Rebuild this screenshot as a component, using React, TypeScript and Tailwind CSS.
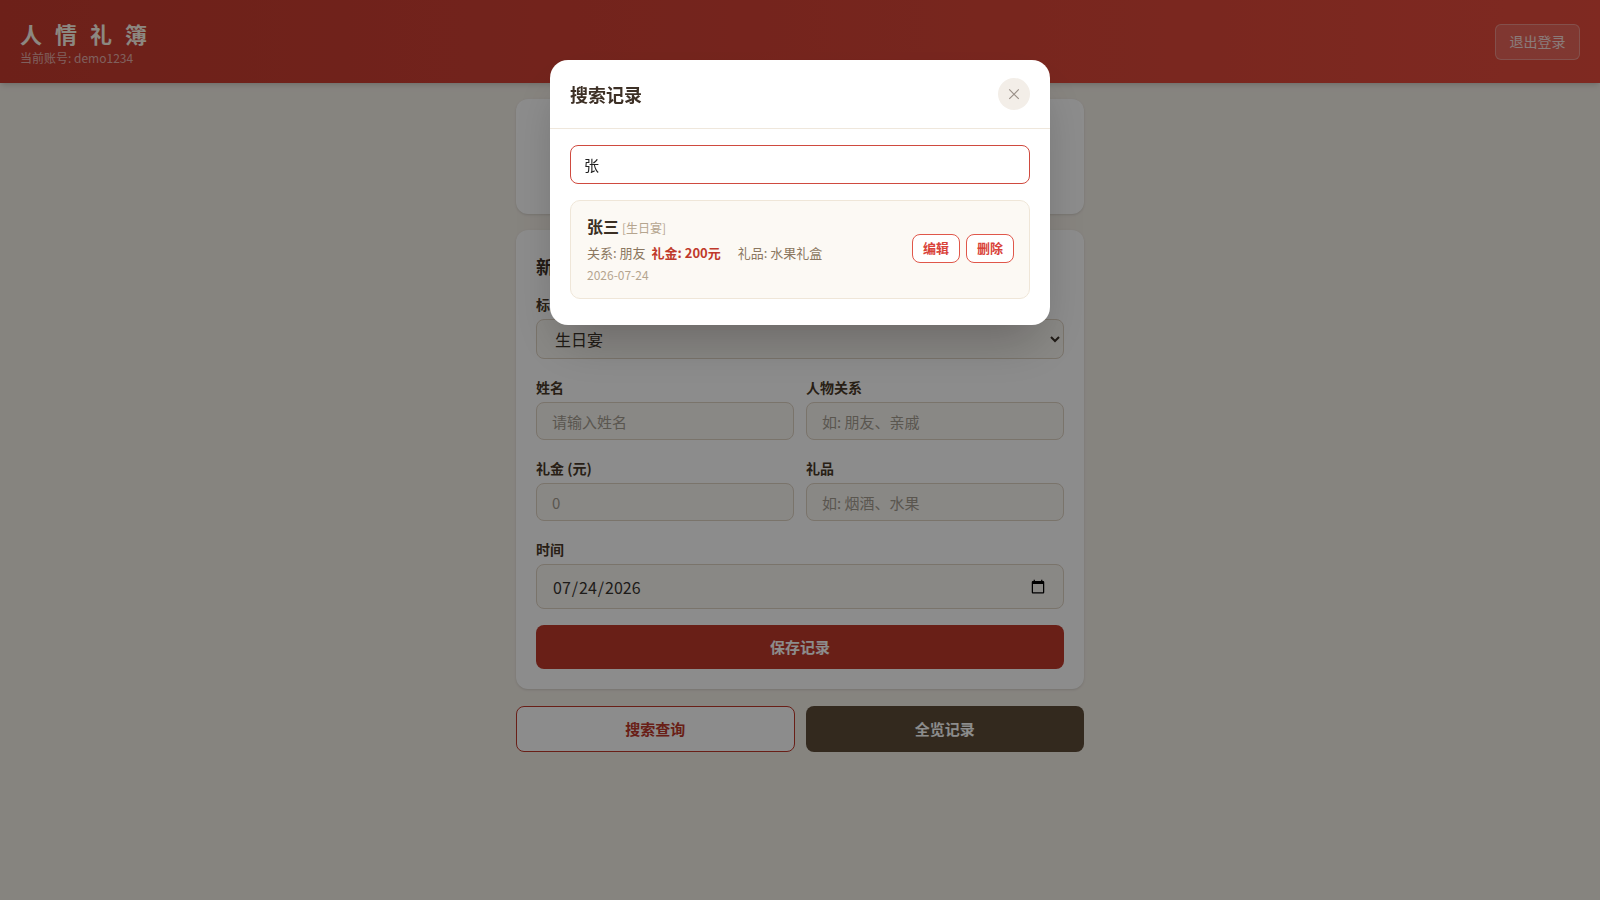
import React, { useMemo, useState } from 'react';

interface GiftRecord {
  id: number;
  name: string;
  tag: string;
  relation: string;
  amount: number;
  gift: string;
  date: string;
}

const initialRecords: GiftRecord[] = [
  { id: 1, name: '张三', tag: '生日宴', relation: '朋友', amount: 200, gift: '水果礼盒', date: '2026-07-24' },
];

const tagOptions = ['婚宴', '生日宴', '满月酒', '乔迁宴', '升学宴', '白事', '其他'];

const inputClass =
  'w-full rounded-lg border border-[#ded3c3] bg-[#faf7f2] px-[15px] text-[15px] text-[#3a3228] outline-none placeholder:text-[#a49d91]';

const FieldLabel: React.FC<{ children: React.ReactNode }> = ({ children }) => (
  <label className="mb-[5px] block text-[14px] leading-[20px] font-bold text-[#4a3a28]">{children}</label>
);

const RecordItem: React.FC<{ record: GiftRecord }> = ({ record }) => (
  <div className="flex items-center justify-between rounded-[10px] border border-[#efe6d8] bg-[#fcf9f4] pt-[11px] pb-[14px] pl-4 pr-[15px]">
    <div>
      <div className="leading-[28px]">
        <span className="text-[16px] font-bold text-[#3a2e22]">{record.name}</span>
        <span className="ml-[3px] text-[12px] text-[#b5a58f]">[{record.tag}]</span>
      </div>
      <div className="mt-px text-[13px] leading-[20px] text-[#8b7760]">
        <span>关系: {record.relation}</span>
        <span className="ml-[6px] font-bold text-[#c0392b]">礼金: {record.amount}元</span>
        <span className="ml-[17px]">礼品: {record.gift}</span>
      </div>
      <div className="mt-[3px] text-[12px] leading-[18px] text-[#b5a58f]">{record.date}</div>
    </div>
    <div className="flex gap-[6px]">
      <button
        type="button"
        className="h-[29px] rounded-lg border border-[#e0574a] bg-white px-[10px] text-[13px] font-bold text-[#d9433a]"
      >
        编辑
      </button>
      <button
        type="button"
        className="h-[29px] rounded-lg border border-[#e0574a] bg-white px-[10px] text-[13px] font-bold text-[#d9433a]"
      >
        删除
      </button>
    </div>
  </div>
);

export default function App() {
  const [records] = useState<GiftRecord[]>(initialRecords);
  const [query, setQuery] = useState('张');
  const [searchOpen, setSearchOpen] = useState(true);
  const [form, setForm] = useState({
    tag: '生日宴',
    name: '',
    relation: '',
    amount: '',
    gift: '',
    date: '2026-07-24',
  });

  const results = useMemo(
    () => records.filter((r) => query && (r.name.includes(query) || r.relation.includes(query) || r.gift.includes(query))),
    [records, query]
  );

  const total = records.reduce((sum, r) => sum + r.amount, 0);

  const update = (key: keyof typeof form) => (e: React.ChangeEvent<HTMLInputElement | HTMLSelectElement>) =>
    setForm({ ...form, [key]: e.target.value });

  return (
    <div className="min-h-screen bg-[#f5f0e8] font-['Noto_Sans_CJK_SC','Noto_Sans',sans-serif]">
      <header className="flex h-[83px] items-center justify-between bg-linear-to-r from-[#c63b2f] to-[#e74c3d] px-5 shadow-md">
        <div className="mt-[2px]">
          <h1 className="text-[22px] leading-[28px] font-bold tracking-[13px] text-[#fff7ec]">人情礼簿</h1>
          <p className="mt-[2px] text-[12px] leading-[18px] text-white/60">当前账号: demo1234</p>
        </div>
        <button
          type="button"
          className="h-9 w-[85px] rounded-md border border-white/30 bg-white/15 text-[14px] text-white/80"
        >
          退出登录
        </button>
      </header>

      <main className="mx-auto w-[568px] pt-4 pb-10">
        {/* summary */}
        <section className="flex h-[115px] items-center justify-center rounded-xl bg-white shadow-sm">
          <div className="grid w-[420px] grid-cols-3 text-center">
            <div>
              <div className="text-[13px] text-[#8b7760]">记录条数</div>
              <div className="mt-1 text-[22px] font-bold text-[#3d3026]">{records.length}</div>
            </div>
            <div>
              <div className="text-[13px] text-[#8b7760]">礼金合计</div>
              <div className="mt-1 text-[22px] font-bold text-[#c0392b]">¥{total}</div>
            </div>
            <div>
              <div className="text-[13px] text-[#8b7760]">礼品件数</div>
              <div className="mt-1 text-[22px] font-bold text-[#3d3026]">{records.filter((r) => r.gift).length}</div>
            </div>
          </div>
        </section>

        {/* new record form */}
        <section className="mt-4 rounded-xl bg-white p-5 shadow-sm">
          <h2 className="mb-3 text-[18px] leading-[32px] font-bold text-[#3d3026]">新增记录</h2>

          <div className="mb-[18px]">
            <FieldLabel>标签</FieldLabel>
            <select
              value={form.tag}
              onChange={update('tag')}
              className="h-10 w-full rounded-lg border border-[#ded3c3] bg-[#faf7f2] px-[14px] text-[16px] text-[#3a3228] outline-none"
            >
              {tagOptions.map((t) => (
                <option key={t} value={t}>
                  {t}
                </option>
              ))}
            </select>
          </div>

          <div className="mb-[18px] grid grid-cols-2 gap-3">
            <div>
              <FieldLabel>姓名</FieldLabel>
              <input value={form.name} onChange={update('name')} placeholder="请输入姓名" className={`${inputClass} h-[38px]`} />
            </div>
            <div>
              <FieldLabel>人物关系</FieldLabel>
              <input
                value={form.relation}
                onChange={update('relation')}
                placeholder="如: 朋友、亲戚"
                className={`${inputClass} h-[38px]`}
              />
            </div>
          </div>

          <div className="mb-[18px] grid grid-cols-2 gap-3">
            <div>
              <FieldLabel>礼金 (元)</FieldLabel>
              <input
                type="number"
                value={form.amount}
                onChange={update('amount')}
                placeholder="0"
                className={`${inputClass} h-[38px]`}
              />
            </div>
            <div>
              <FieldLabel>礼品</FieldLabel>
              <input value={form.gift} onChange={update('gift')} placeholder="如: 烟酒、水果" className={`${inputClass} h-[38px]`} />
            </div>
          </div>

          <div>
            <FieldLabel>时间</FieldLabel>
            <input
              type="date"
              value={form.date}
              onChange={update('date')}
              className="h-[45px] w-full rounded-lg border border-[#ded3c3] bg-[#faf7f2] px-[15px] text-[16px] text-[#383430] outline-none"
            />
          </div>

          <button
            type="button"
            className="mt-4 h-11 w-full rounded-lg bg-[#c0392b] text-[15px] font-bold text-white"
          >
            保存记录
          </button>
        </section>

        <div className="mt-[17px] grid grid-cols-2 gap-[11px]">
          <button
            type="button"
            onClick={() => setSearchOpen(true)}
            className="h-[46px] rounded-lg border border-[#c0392b] bg-white text-[15px] font-bold text-[#c0392b]"
          >
            搜索查询
          </button>
          <button type="button" className="h-[46px] rounded-lg bg-[#5d4c38] text-[15px] font-bold text-white">
            全览记录
          </button>
        </div>
      </main>

      {searchOpen && (
        <div className="fixed inset-0 z-50 flex items-start justify-center bg-black/45 pt-[60px]">
          <div className="w-[500px] overflow-hidden rounded-[18px] bg-white shadow-2xl">
            <div className="flex items-center justify-between border-b border-[#efe7dc] px-5 py-[18px]">
              <h3 className="text-[18px] font-bold text-[#3d3026]">搜索记录</h3>
              <button
                type="button"
                onClick={() => setSearchOpen(false)}
                className="flex size-8 items-center justify-center rounded-full bg-[#f3eee8] pb-[2px] text-[16px] leading-none text-[#9a9088]"
              >
                ×
              </button>
            </div>
            <div className="px-5 pt-4 pb-[26px]">
              <input
                value={query}
                onChange={(e) => setQuery(e.target.value)}
                className="h-[39px] w-full rounded-lg border border-[#cf4a3f] px-[13px] text-[15px] text-[#222] outline-none"
              />
              <div className="mt-4 flex flex-col gap-3">
                {results.map((r) => (
                  <RecordItem key={r.id} record={r} />
                ))}
              </div>
            </div>
          </div>
        </div>
      )}
    </div>
  );
}
